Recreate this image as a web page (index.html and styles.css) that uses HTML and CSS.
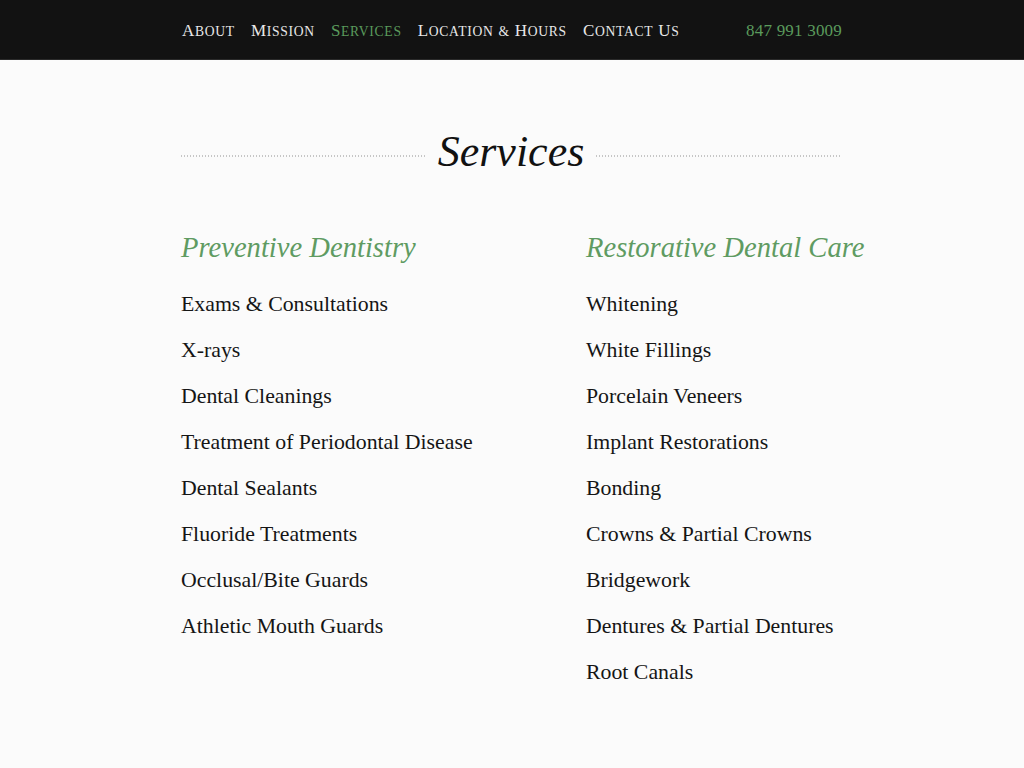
FILE: index.html
```html
<!DOCTYPE html>
<html lang="en">
<head>
<meta charset="utf-8">
<title>Services</title>
<link rel="stylesheet" href="styles.css">
</head>
<body>
<header class="topbar">
  <nav class="wrap nav">
    <ul class="menu">
      <li><a href="#">A<span class="sc">bout</span></a></li>
      <li><a href="#">M<span class="sc">ission</span></a></li>
      <li><a href="#" class="active">S<span class="sc">ervices</span></a></li>
      <li><a href="#">L<span class="sc">ocation</span> <span class="sc">&amp;</span> H<span class="sc">ours</span></a></li>
      <li><a href="#">C<span class="sc">ontact</span> U<span class="sc">s</span></a></li>
    </ul>
    <span class="phone">847 991 3009</span>
  </nav>
</header>
<main class="wrap">
  <div class="title-row">
    <span class="dots"></span>
    <h1 class="title">Services</h1>
    <span class="dots"></span>
  </div>
  <div class="columns">
    <section class="col">
      <h2 class="col-head">Preventive Dentistry</h2>
      <ul class="list">
        <li>Exams &amp; Consultations</li>
        <li>X-rays</li>
        <li>Dental Cleanings</li>
        <li>Treatment of Periodontal Disease</li>
        <li>Dental Sealants</li>
        <li>Fluoride Treatments</li>
        <li>Occlusal/Bite Guards</li>
        <li>Athletic Mouth Guards</li>
      </ul>
    </section>
    <section class="col">
      <h2 class="col-head">Restorative Dental Care</h2>
      <ul class="list">
        <li>Whitening</li>
        <li>White Fillings</li>
        <li>Porcelain Veneers</li>
        <li>Implant Restorations</li>
        <li>Bonding</li>
        <li>Crowns &amp; Partial Crowns</li>
        <li>Bridgework</li>
        <li>Dentures &amp; Partial Dentures</li>
        <li>Root Canals</li>
      </ul>
    </section>
  </div>
</main>
</body>
</html>
```

FILE: styles.css
```css
* { box-sizing: border-box; }
html, body { margin: 0; padding: 0; }
body {
  background: #fbfbfb;
  color: #151515;
  font-family: "Liberation Serif", "DejaVu Serif", serif;
  padding-right: 2px;
}
.wrap {
  width: 660px;
  margin: 0 auto;
}
.topbar {
  background: #121212;
  height: 60px;
  border-bottom: 1px solid #2a2a2a;
  margin-right: -2px;
}
.nav {
  display: flex;
  align-items: center;
  justify-content: space-between;
  height: 59px;
  padding-top: 2px;
}
.menu {
  list-style: none;
  margin: 0;
  padding: 0;
  display: flex;
  gap: 16px;
}
.menu a {
  color: #e8e8e8;
  text-decoration: none;
  text-transform: uppercase;
  font-size: 17px;
  letter-spacing: 0.72px;
}
.menu .sc { font-size: 13.6px; }
.menu a.active { color: #5a9a5c; }
.phone {
  color: #5a9a5c;
  font-size: 17px;
  letter-spacing: 0.2px;
}
.title-row {
  display: flex;
  align-items: center;
  gap: 12px;
  margin-top: 60px;
}
.dots {
  flex: 1;
  height: 2px;
  margin-top: 8px;
  background: repeating-linear-gradient(to right, #c6c6c6 0 1px, transparent 1px 3px);
}
.title {
  margin: 0;
  font-style: italic;
  font-weight: normal;
  font-size: 44px;
  line-height: 64px;
  color: #111;
}
.columns {
  display: grid;
  grid-template-columns: 405px 1fr;
  margin-top: 44px;
}
.col-head {
  margin: 0 0 13px;
  font-style: italic;
  font-weight: normal;
  font-size: 28.6px;
  line-height: 40px;
  color: #5f9b62;
  white-space: nowrap;
}
.list {
  list-style: none;
  margin: 0;
  padding: 0;
}
.list li {
  font-size: 21.8px;
  line-height: 46px;
}
```
